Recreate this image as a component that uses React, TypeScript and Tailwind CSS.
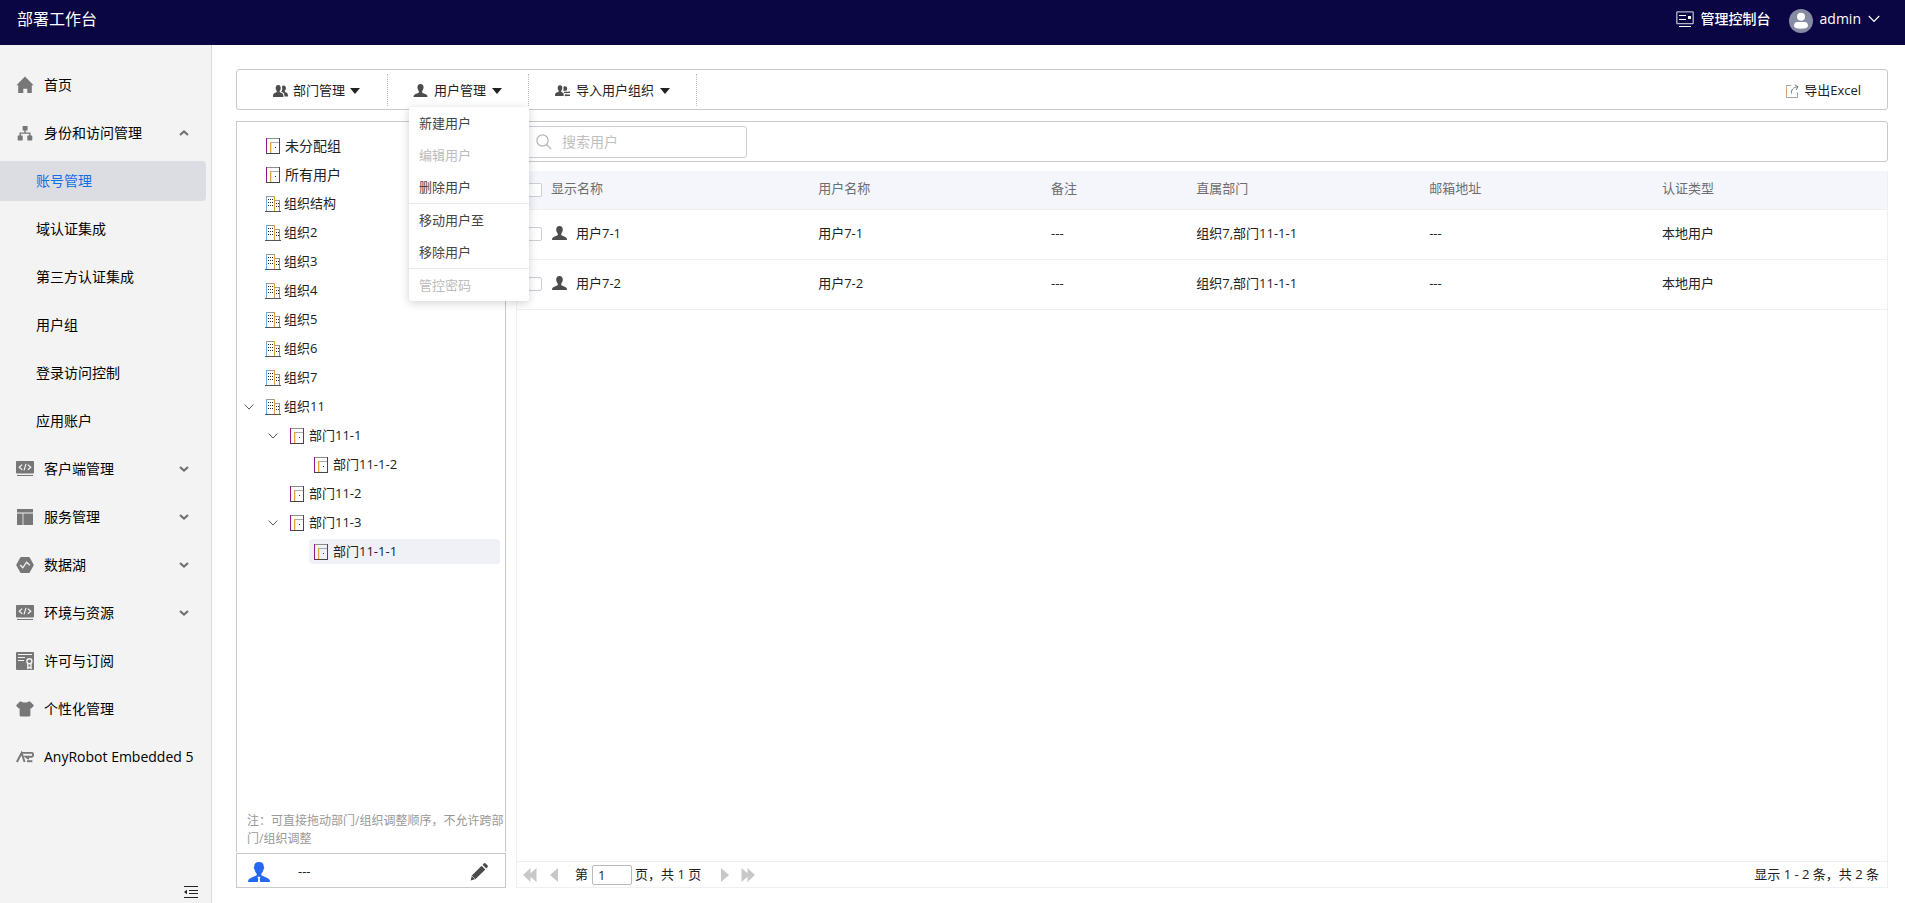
import React, { useState } from 'react';

interface IconProps {
  className?: string;
}

const HomeIcon: React.FC<IconProps> = ({ className }) => (
  <svg viewBox="0 0 18 18" className={className} fill="currentColor">
    <path d="M9 .6 17.600 9.200h-1.800V17h-4.500v-4.200H7.300V17H2.200V9.200H.4z" />
  </svg>
);

const SitemapIcon: React.FC<IconProps> = ({ className }) => (
  <svg viewBox="0 0 18 18" className={className} fill="currentColor">
    <rect x="6.600" y="2" width="5" height="4.600" rx=".6" />
    <rect x="1.700" y="11.400" width="5" height="5" rx=".6" />
    <rect x="11.300" y="11.400" width="5" height="5" rx=".6" />
    <path d="M9 6v3M4.200 12V9.100h9.600V12" fill="none" stroke="currentColor" strokeWidth="1.400" />
  </svg>
);

const CodeIcon: React.FC<IconProps> = ({ className }) => (
  <svg viewBox="0 0 18 18" className={className}>
    <rect x="0" y="1" width="18" height="12.6" rx=".8" fill="currentColor" />
    <path d="M1 15.5h16" stroke="currentColor" />
    <path d="M6.2 4.6 3.2 7.2l3 2.6M11.8 4.6l3 2.6-3 2.6M10 3.8 8 10.4" fill="none" stroke="#f3f3f3" strokeWidth="1.2" />
  </svg>
);

const LayoutIcon: React.FC<IconProps> = ({ className }) => (
  <svg viewBox="0 0 18 18" className={className} fill="currentColor">
    <path d="M1 1h16v3.400H1zM1 5.400h5.600V17H1zM7.400 5.400H17V17H7.400z" />
  </svg>
);

const HexIcon: React.FC<IconProps> = ({ className }) => (
  <svg viewBox="0 0 18 18" className={className}>
    <path d="M5.2 1h7.6a1 1 0 0 1 .9.5L17.6 8.4a1.2 1.2 0 0 1 0 1.2l-3.9 6.9a1 1 0 0 1-.9.5H5.2a1 1 0 0 1-.9-.5L.4 9.6a1.2 1.2 0 0 1 0-1.2l3.900-6.900a1 1 0 0 1 .9-.5z" fill="currentColor" />
    <path d="M4.200 9 6.800 11.800 10.600 6.200 13.800 9.200" fill="none" stroke="#f3f3f3" strokeWidth="1.300" />
  </svg>
);

const LicenseIcon: React.FC<IconProps> = ({ className }) => (
  <svg viewBox="0 0 18 18" className={className}>
    <rect width="18" height="18" rx="1" fill="currentColor" />
    <path d="M2 2.500h14M2 5.500h7M2 8.500h6" stroke="#f3f3f3" strokeWidth="1.200" />
    <circle cx="13.400" cy="9.200" r="2.500" fill="none" stroke="#f3f3f3" strokeWidth="1.400" />
    <path d="M11.800 11.400v4.900l1.600-1 1.600 1v-4.900" fill="none" stroke="#f3f3f3" strokeWidth="1.400" />
  </svg>
);

const ShirtIcon: React.FC<IconProps> = ({ className }) => (
  <svg viewBox="0 0 18 18" className={className} fill="currentColor">
    <path d="M5.400 1.600c1 1.300 6.200 1.300 7.200 0h1.500L18 5.400l-2.600 3.200-1-.7V15a1.400 1.400 0 0 1-1.400 1.400H5A1.400 1.400 0 0 1 3.600 15V7.900l-1 .7L0 5.400l3.900-3.800z" />
  </svg>
);

const RobotLogo: React.FC<IconProps> = ({ className }) => (
  <svg viewBox="0 0 18 18" className={className} fill="none" stroke="currentColor" strokeWidth="1.900">
    <path d="M.9 14 5.600 5 8.600 14" />
    <path d="M5.400 4.900H15.800a1.200 1.200 0 0 1 1.200 1.200v1.400a1.200 1.200 0 0 1-1.200 1.200H9.800l3 2.200" />
    <path d="M11 13.200h5.400" />
  </svg>
);

const Chevron: React.FC<{ up?: boolean }> = ({ up }) => (
  <svg viewBox="0 0 10 10" className={`h-2.5 w-2.5 ${up ? 'rotate-180' : ''}`} fill="none" stroke="#6f6f6f" strokeWidth="2">
    <path d="M1 3 5 6.600 9 3" />
  </svg>
);

const ThinChevron: React.FC<IconProps> = ({ className }) => (
  <svg viewBox="0 0 12 12" className={className} fill="none" stroke="currentColor" strokeWidth="1.200">
    <path d="M.8 3 6 8.500 11.200 3" />
  </svg>
);

const Caret = () => (
  <svg viewBox="0 0 10 6" className="h-1.5 w-2.5" fill="#222">
    <path d="M0 0h10L5 6z" />
  </svg>
);

const UserIcon: React.FC<IconProps> = ({ className }) => (
  <svg viewBox="0 0 15 15" className={className} fill="currentColor">
    <path d="M7.500 0c2.300 0 3.300 1.500 3.300 3.600 0 1.500-.6 3-1.500 3.900v1.800l4 1.700c1.100.5 1.700 1.300 1.700 3H0c0-1.700.6-2.500 1.700-3l4-1.700V7.500c-.9-.9-1.500-2.400-1.500-3.900C4.200 1.500 5.200 0 7.500 0z" />
  </svg>
);

const UsersIcon: React.FC<IconProps> = ({ className }) => (
  <svg viewBox="0 0 15 14" className={className} fill="currentColor">
    <path d="M5.200 1c1.700 0 2.500 1.200 2.500 2.900 0 1.200-.5 2.300-1.100 3v1.200l2.600 1.200c.8.400 1.200 1.200 1.200 3.700H0c0-2.500.4-3.300 1.200-3.700l2.600-1.200V6.900c-.6-.7-1.100-1.800-1.100-3C2.700 2.200 3.500 1 5.200 1z" />
    <path d="M8.900 2.500c.4-.6 1-.9 1.800-.9 1.500 0 2.200 1 2.200 2.500 0 1-.4 2-1 2.600v1.200l1.900.9c.8.400 1.200 1.400 1.200 3.800h-3.500c0-2.300-.4-3.300-1.500-4L8.300 7.700c.8-1 1.300-3.200.6-5.200z" />
  </svg>
);

const ImportUsersIcon: React.FC<IconProps> = ({ className }) => (
  <svg viewBox="0 0 15 14" className={className} fill="currentColor">
    <path d="M5 1.200c1.600 0 2.300 1.100 2.300 2.700 0 1.200-.4 2.100-1 2.800v1.200l2.300 1.200v2.900H0c0-2 .4-2.900 1.200-3.200l2.500-1V6.700c-.6-.7-1-1.600-1-2.800 0-1.600.7-2.700 2.300-2.700z" />
    <path d="M8.300 2.800c1.700-1.200 3.900-.2 3.900 1.700 0 .9-.3 1.700-.9 2.300H8.100c.6-1.200.7-2.700.2-4zM9 7.700h5.200l-.6-1 1.400 1.400v1H9zM9.400 11.200l2-1.600v1H15v1.400h-3.600l-.4.6z" />
  </svg>
);

const SuitIcon: React.FC<IconProps> = ({ className }) => (
  <svg viewBox="0 0 22 20" className={className} fill="#2468f2">
    <path d="M11 0c3.400 0 4.800 1.600 4.800 4.700.7.400.6 2.300-.4 2.800-.4 2-1.100 3.300-2.100 4.200v1.600l6 2.700c1.700.7 2.700 2 2.700 4H12.200l-.5-3.200.7-1.200-.7-.9h-1.400l-.7.9.7 1.200-.5 3.200H0c0-2 1-3.300 2.700-4l6-2.700v-1.600c-1-.9-1.700-2.200-2.100-4.200-1-.5-1.100-2.400-.4-2.800C6.200 1.600 7.600 0 11 0z" />
  </svg>
);

const PencilIcon: React.FC<IconProps> = ({ className }) => (
  <svg viewBox="0 0 18 18" className={className} fill="#4a4a4a">
    <path d="M.6 17.400l1.300-5L11.600 2.700l3.700 3.700L5.600 16.100zM12.600 1.700 13.700.6a1.400 1.400 0 0 1 2 0l1.700 1.700a1.400 1.400 0 0 1 0 2l-1.100 1.100z" />
    <path d="M2 13l3 3" stroke="#fff" strokeWidth=".6" />
  </svg>
);

const ExportIcon: React.FC<IconProps> = ({ className }) => (
  <svg viewBox="0 0 14 14" className={className} fill="none">
    <path d="M6 1.500H1.500v12h11V8.500" stroke="#a3a3a3" />
    <path d="M1.500 1.500v12" stroke="#cfa583" />
    <path d="M6.500 9.500c-.4-3.500 1.500-6.200 6-6.700M9.800.8l3.200 2L11 6" stroke="#777" />
  </svg>
);

const DeptIcon = () => (
  <svg viewBox="0 0 14 16" className="h-4 w-3.5 shrink-0" fill="none" shapeRendering="crispEdges">
    <path d="M0 .5h14" stroke="#8d8d8d" />
    <path d="M.5 0v16" stroke="#8c1a8c" />
    <path d="M13.500 0v16" stroke="#5f3a66" />
    <path d="M0 15.500h14" stroke="#444" />
    <path d="M4 4.500h9" stroke="#a9a9a9" />
    <path d="M4.500 4v11" stroke="#d9a441" />
    <path d="M5.500 5v10" stroke="#dce6ee" />
    <path d="M9 9.500h1" stroke="#333" />
  </svg>
);

const OrgIcon = () => (
  <svg viewBox="0 0 16 16" className="h-4 w-4 shrink-0" fill="none" shapeRendering="crispEdges">
    <path d="M1 .5h9M10 4.500h5" stroke="#9a9a9a" />
    <path d="M1.500 1v14" stroke="#6fb0ea" />
    <path d="M9.500 0v15" stroke="#d9a441" />
    <path d="M14.500 4v11" stroke="#a08878" />
    <path d="M0 15.500h16" stroke="#555" />
    <path d="M3 3.500h1M5 3.500h1M7 3.500h1M3 6.500h1M5 6.500h1M7 6.500h1M3 9.500h1M5 9.500h1M7 9.500h1M11 7.500h1M13 7.500h1M11 10.500h1M13 10.500h1" stroke="#222" />
  </svg>
);

const ConsoleIcon = () => (
  <svg viewBox="0 0 18 16" className="h-4 w-[18px]" fill="none" stroke="#fff">
    <rect x=".8" y=".8" width="16.400" height="11.800" rx=".6" strokeWidth="1.300" opacity=".7" />
    <path d="M3 4.500h7M3 8.500h7M3 15.500h12" />
    <rect x="12" y="5" width="3" height="3" fill="#fff" stroke="none" />
  </svg>
);

const Avatar = () => (
  <svg viewBox="0 0 24 24" className="mt-1 h-6 w-6">
    <circle cx="12" cy="12" r="12" fill="#868ba3" />
    <circle cx="12" cy="7.800" r="4" fill="#fff" />
    <path d="M5 16.800c0-2.500 1.200-3.800 3.200-3.800h7.600c2 0 3.200 1.300 3.200 3.800 0 2-2.400 2.900-7 2.900s-7-.9-7-2.900z" fill="#fff" />
  </svg>
);

const CollapseIcon = () => (
  <svg viewBox="0 0 14 14" className="h-3.5 w-3.5" fill="none" stroke="#222">
    <path d="M0 1.500h14M5 5.500h9M5 8.500h9M0 12.500h14" />
    <path d="M0 7 3 4.800v4.400z" fill="#222" stroke="none" />
  </svg>
);

const PageArrow: React.FC<{ double?: boolean; right?: boolean }> = ({ double, right }) => (
  <svg viewBox={double ? '0 0 14 14' : '0 0 8 14'} className={`h-3.5 ${double ? 'w-3.5' : 'w-2'} ${right ? 'rotate-180' : ''}`} fill="#c8c8c8">
    <path d={double ? 'M0 7 7.500 0v14zM5.500 7l8-7v14z' : 'M0 7 8 0v14z'} />
  </svg>
);

interface NavItem {
  label: string;
  Icon: React.FC<IconProps>;
  state?: 'open' | 'closed';
  children?: string[];
}

const navItems: NavItem[] = [
  { label: '首页', Icon: HomeIcon },
  {
    label: '身份和访问管理',
    Icon: SitemapIcon,
    state: 'open',
    children: ['账号管理', '域认证集成', '第三方认证集成', '用户组', '登录访问控制', '应用账户'],
  },
  { label: '客户端管理', Icon: CodeIcon, state: 'closed' },
  { label: '服务管理', Icon: LayoutIcon, state: 'closed' },
  { label: '数据湖', Icon: HexIcon, state: 'closed' },
  { label: '环境与资源', Icon: CodeIcon, state: 'closed' },
  { label: '许可与订阅', Icon: LicenseIcon },
  { label: '个性化管理', Icon: ShirtIcon },
  { label: 'AnyRobot Embedded 5', Icon: RobotLogo },
];

const treeNodes = [
  { label: '未分配组', level: 0, type: 'dept', large: true },
  { label: '所有用户', level: 0, type: 'dept', large: true },
  { label: '组织结构', level: 0, type: 'org' },
  { label: '组织2', level: 0, type: 'org' },
  { label: '组织3', level: 0, type: 'org' },
  { label: '组织4', level: 0, type: 'org' },
  { label: '组织5', level: 0, type: 'org' },
  { label: '组织6', level: 0, type: 'org' },
  { label: '组织7', level: 0, type: 'org' },
  { label: '组织11', level: 0, type: 'org', open: true },
  { label: '部门11-1', level: 1, type: 'dept', open: true },
  { label: '部门11-1-2', level: 2, type: 'dept' },
  { label: '部门11-2', level: 1, type: 'dept' },
  { label: '部门11-3', level: 1, type: 'dept', open: true },
  { label: '部门11-1-1', level: 2, type: 'dept' },
];

const menuItems = [
  { label: '新建用户' },
  { label: '编辑用户', disabled: true },
  { label: '删除用户' },
  { label: '移动用户至', divider: true },
  { label: '移除用户' },
  { label: '管控密码', disabled: true, divider: true },
];

const users = [
  { name: '用户7-1', remark: '---', dept: '组织7,部门11-1-1', mail: '---', auth: '本地用户' },
  { name: '用户7-2', remark: '---', dept: '组织7,部门11-1-1', mail: '---', auth: '本地用户' },
];

const levelPadding = ['pl-0', 'pl-6', 'pl-12'];

const Header = () => (
  <header className="flex h-[45px] shrink-0 items-center justify-between bg-[#0a0543] pr-[25px] pb-[7px] pl-[17px] text-white">
    <h1 className="text-base">部署工作台</h1>
    <div className="flex items-center gap-[18px] text-sm">
      <a href="#console" className="flex items-center gap-[7px] font-medium">
        <ConsoleIcon />
        管理控制台
      </a>
      <button className="flex items-center gap-[7px]">
        <Avatar />
        admin
        <ThinChevron className="h-3 w-3" />
      </button>
    </div>
  </header>
);

const Sidebar = () => {
  const [active, setActive] = useState('账号管理');

  return (
    <aside className="flex w-[212px] shrink-0 flex-col border-r border-[#dcdcdc] bg-[#f3f3f3] text-sm text-black">
      <nav className="flex flex-1 flex-col gap-2 pt-5 pr-[5px]">
        {navItems.map(({ label, Icon, state, children }) => (
          <React.Fragment key={label}>
            <button className="flex h-10 items-center gap-[10px] pr-[17px] pl-4 text-left">
              <Icon className="h-[18px] w-[18px] shrink-0 text-[#777]" />
              <span className="flex-1 whitespace-nowrap">{label}</span>
              {state && <Chevron up={state === 'open'} />}
            </button>
            {children?.map((child) => (
              <button
                key={child}
                onClick={() => setActive(child)}
                className={`h-10 rounded-r-sm pl-9 text-left ${active === child ? 'bg-[#dcdde2] text-[#126ee3]' : ''}`}
              >
                {child}
              </button>
            ))}
          </React.Fragment>
        ))}
      </nav>
      <button aria-label="收起" className="mr-[13px] mb-1 self-end">
        <CollapseIcon />
      </button>
    </aside>
  );
};

const Toolbar = () => {
  const [menuOpen, setMenuOpen] = useState(true);

  return (
    <div className="flex h-[41px] shrink-0 items-center justify-between rounded-[3px] border border-[#c9c9c9] pr-[26px] pl-[11px] text-[13px] text-[#222]">
      <div className="flex h-8">
        <button className="flex items-center gap-[5px] border-r border-dotted border-[#bbb] pt-0.5 pr-[27px] pl-[25px]">
          <UsersIcon className="h-3.5 w-[15px] text-[#4d4d4d]" />
          部门管理
          <Caret />
        </button>
        <div className="relative flex border-r border-dotted border-[#bbb]">
          <button className="flex items-center gap-1.5 px-[26px] pt-0.5 pl-[25px]" onClick={() => setMenuOpen(!menuOpen)}>
            <UserIcon className="h-3.5 w-[15px] text-[#4d4d4d]" />
            用户管理
            <Caret />
          </button>
          {menuOpen && (
            <div className="absolute top-[33px] left-[21px] z-10 w-[120px] rounded-[3px] bg-white shadow-[0_2px_10px_rgba(0,0,0,0.18)]">
              {menuItems.map((item) => (
                <button
                  key={item.label}
                  disabled={item.disabled}
                  className={`block h-8 w-full pl-[10px] text-left leading-[30px] ${item.disabled ? 'text-[#bbb]' : 'text-[#444]'} ${
                    item.divider ? 'box-content w-[110px]! border-t border-[#e8e8e8]' : ''
                  }`}
                >
                  {item.label}
                </button>
              ))}
            </div>
          )}
        </div>
        <button className="flex items-center gap-1.5 border-r border-dotted border-[#bbb] px-[26px] pt-0.5">
          <ImportUsersIcon className="h-3.5 w-[15px] text-[#4d4d4d]" />
          导入用户组织
          <Caret />
        </button>
      </div>
      <button className="flex items-center gap-[5px] pt-0.5">
        <ExportIcon className="h-3.5 w-3.5" />
        导出Excel
      </button>
    </div>
  );
};

const TreePanel = () => {
  const [selected, setSelected] = useState('部门11-1-1');

  return (
    <div className="flex w-[270px] shrink-0 flex-col">
      <div className="flex min-h-0 flex-1 flex-col border border-b-0 border-[#c9c9c9]">
        <ul className="flex flex-1 flex-col gap-1 pt-[11px] pr-[5px] text-[13px] text-[#222]">
          {treeNodes.map((node) => (
            <li key={node.label} className={`flex h-[25px] ${levelPadding[node.level]}`}>
              <span className="flex w-6 shrink-0 items-center justify-center">
                {node.open && <ThinChevron className="h-2.5 w-2.5 text-[#555]" />}
              </span>
              <button
                onClick={() => setSelected(node.label)}
                className={`flex flex-1 items-center rounded-sm text-left ${node.type === 'org' ? 'gap-[3px] pl-1' : 'gap-[5px] pl-[5px]'} ${
                  node.large ? 'text-sm' : ''
                } ${selected === node.label ? 'bg-[#f0f1f7]' : ''}`}
              >
                {node.type === 'org' ? <OrgIcon /> : <DeptIcon />}
                {node.label}
              </button>
            </li>
          ))}
        </ul>
        <p className="pb-1 pl-[10px] text-xs leading-[18px] text-[#999]">
          注：可直接拖动部门/组织调整顺序，不允许跨部门/组织调整
        </p>
      </div>
      <div className="mt-px flex h-[35px] items-center border border-[#c9c9c9] pr-[17px] pl-[11px] pt-0.5 text-[13px] text-[#222]">
        <SuitIcon className="h-5 w-[22px]" />
        <span className="flex-1 pl-7">---</span>
        <button aria-label="编辑">
          <PencilIcon className="h-[18px] w-[18px]" />
        </button>
      </div>
    </div>
  );
};

const CheckBox: React.FC<{ label: string }> = ({ label }) => (
  <input
    type="checkbox"
    aria-label={label}
    className="ml-[11px] block h-3.5 w-3.5 appearance-none rounded-xs border border-[#ccced8] bg-white checked:bg-[#126ee3]"
  />
);

const UserTable = () => (
  <table className="w-full table-fixed border-separate border-spacing-0 text-left text-[13px] text-[#222]">
    <colgroup>
      <col className="w-[25px]" />
      <col className="w-[19.5%]" />
      <col className="w-[17%]" />
      <col className="w-[10.6%]" />
      <col className="w-[17%]" />
      <col className="w-[17%]" />
      <col />
    </colgroup>
    <thead>
      <tr className="h-[39px] bg-[#f5f6fc] text-[#6e6e6e]">
        <th className="border-b border-[#f0f0f0] p-0">
          <CheckBox label="全选" />
        </th>
        {['显示名称', '用户名称', '备注', '直属部门', '邮箱地址', '认证类型'].map((title) => (
          <th key={title} className="border-b border-[#f0f0f0] pt-0 pr-0 pb-0.5 pl-[9px] font-normal">
            {title}
          </th>
        ))}
      </tr>
    </thead>
    <tbody>
      {users.map((user) => (
        <tr key={user.name} className="h-[50px]">
          <td className="border-b border-[#f0f0f0] pb-0.5">
            <CheckBox label={user.name} />
          </td>
          <td className="border-b border-[#f0f0f0] pt-0 pr-0 pb-0.5 pl-[10px]">
            <span className="flex items-center gap-[9px]">
              <UserIcon className="h-[15px] w-[15px] text-[#4d4d4d]" />
              {user.name}
            </span>
          </td>
          {[user.name, user.remark, user.dept, user.mail, user.auth].map((value, i) => (
            <td key={i} className="border-b border-[#f0f0f0] pt-0 pr-0 pb-0.5 pl-[9px]">
              {value}
            </td>
          ))}
        </tr>
      ))}
    </tbody>
  </table>
);

const Pagination = () => (
  <div className="flex h-[26px] items-center justify-between border-t border-[#f0f0f0] pr-2 pl-1.5 text-[13px] text-[#222]">
    <div className="flex items-center">
      <button aria-label="首页"><PageArrow double /></button>
      <button aria-label="上一页" className="ml-[13px]"><PageArrow /></button>
      <label className="ml-[17px] flex items-center gap-1">
        第
        <input
          type="text"
          defaultValue="1"
          aria-label="页码"
          className="h-5 w-10 rounded-xs border border-[#bbb] pl-[5px] outline-none"
        />
      </label>
      <span className="ml-[3px]">页，共 1 页</span>
      <button aria-label="下一页" className="ml-5"><PageArrow right /></button>
      <button aria-label="末页" className="ml-3"><PageArrow double right /></button>
    </div>
    <span>显示 1 - 2 条，共 2 条</span>
  </div>
);

const UserPanel = () => (
  <div className="flex min-w-0 flex-1 flex-col gap-[9px]">
    <div className="flex h-[41px] shrink-0 items-center rounded-[3px] border border-[#c9c9c9] pl-2">
      <label className="flex h-8 w-[222px] items-center gap-[10px] rounded-[3px] border border-[#ccced8] pl-[10px]">
        <svg viewBox="0 0 16 16" className="h-4 w-4 shrink-0" fill="none" stroke="#b5b5b5" strokeWidth="1.200">
          <circle cx="6.500" cy="6.500" r="5.600" />
          <path d="m10.500 10.500 4.700 4.700" />
        </svg>
        <input
          type="text"
          aria-label="搜索用户"
          placeholder="搜索用户"
          className="w-full min-w-0 text-sm outline-none placeholder:text-[#bfbfbf]"
        />
      </label>
    </div>
    <div className="flex flex-1 flex-col border border-t-0 border-[#f0f0f0]">
      <div className="flex-1">
        <UserTable />
      </div>
      <Pagination />
    </div>
  </div>
);

export default function App() {
  return (
    <div className="flex h-screen flex-col bg-white font-['Open_Sans','Noto_Sans_CJK_SC',sans-serif]">
      <Header />
      <div className="flex min-h-0 flex-1">
        <Sidebar />
        <main className="flex min-w-0 flex-1 flex-col pt-6 pr-[17px] pb-[15px] pl-6">
          <Toolbar />
          <div className="mt-[11px] flex min-h-0 flex-1 gap-[10px]">
            <TreePanel />
            <UserPanel />
          </div>
        </main>
      </div>
    </div>
  );
}
